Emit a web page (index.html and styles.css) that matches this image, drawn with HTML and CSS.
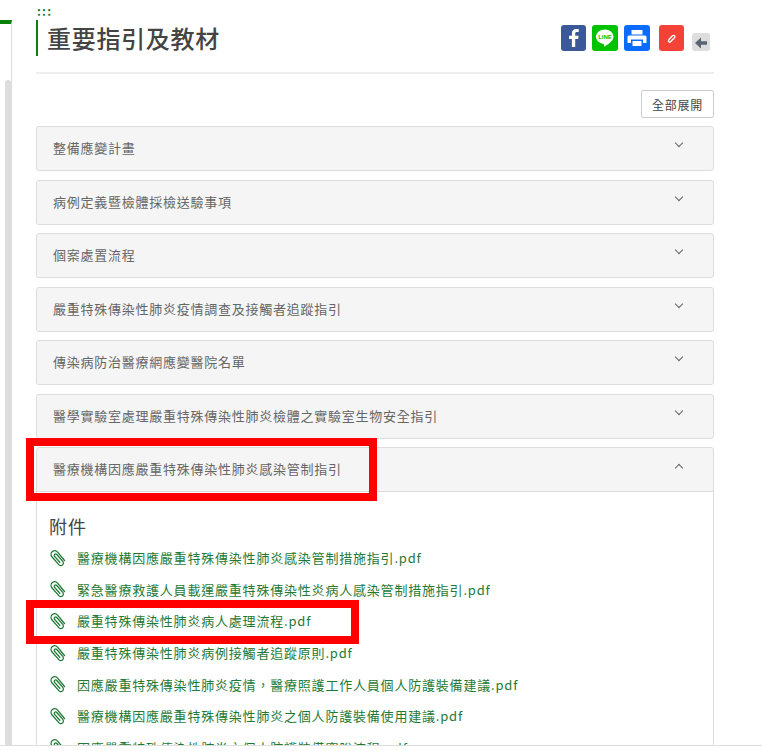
FILE: index.html
```html
<!DOCTYPE html>
<html lang="zh-Hant">
  <head>
    <meta charset="UTF-8" />
    <title>重要指引及教材</title>
    <link rel="stylesheet" href="styles.css">
  </head>
  <body>
    <svg class="icon-defs" width="0" height="0">
      <symbol id="clip" viewBox="0 0 18 18">
        <path d="M15.500 11.500 8.600 3.200C7.300 1.600 5 1.400 3.400 2.600 1.800 3.900 1.600 6.200 2.900 7.800L9.800 15.600C10.700 16.700 12.300 16.900 13.400 16 14.500 15.100 14.700 13.500 13.800 12.400L7.800 5.500C7.300 4.900 6.400 4.800 5.800 5.300 5.200 5.800 5.100 6.700 5.600 7.300L10.800 13.300" fill="none" stroke="#1f7a35" stroke-width="1.300" stroke-linecap="round"/>
      </symbol>
    </svg>

    <div class="page">
      <div class="sidebar">
        <div class="sidebar-scroll"></div>
      </div>

      <div class="main">
        <div class="dots">:::</div>
        <div class="title-row">
          <h2 class="page-title">重要指引及教材</h2>
          <div class="share-icons">
            <span class="share share-fb">
              <svg width="25" height="26" viewBox="0 0 25 26"><path d="M14.200 22V14h2.900l.5-3.300h-3.400V8.600c0-1 .4-1.600 1.700-1.600h1.800V4.100c-.6-.1-1.500-.2-2.500-.2-2.700 0-4.300 1.600-4.300 4.400v2.400H8v3.300h2.900v8z" fill="#fff"/></svg>
            </span>
            <span class="share share-line">
              <svg width="26" height="26" viewBox="0 0 26 26"><path d="M13 4.500c-5 0-9 3.200-9 7.300 0 3.600 3.200 6.600 7.500 7.200.8.200.5 1.200.4 2 0 .5.400.6 1 .3 2.500-1.400 8.600-5.100 8.600-9.500 0-4.100-3.900-7.300-8.500-7.300z" fill="#fff"/><text x="13" y="14.200" class="line-text">LINE</text></svg>
            </span>
            <span class="share share-print">
              <svg width="26" height="26" viewBox="0 0 26 26"><path d="M7.500 5h11v4.500h-11zM5 10.500h16a1.500 1.500 0 0 1 1.500 1.500v6h-3.500v-3.500H7V18H3.500v-6A1.500 1.500 0 0 1 5 10.500zM8.500 16h9v5h-9z" fill="#fff"/></svg>
            </span>
            <span class="share share-pin">
              <svg width="25" height="26" viewBox="0 0 25 26"><path d="M9.800 14.800 13.500 10.800c.7-.7 1.700-.6 2.200 0 .5.600.4 1.400-.2 2l-3.900 4c-.5.500-1.300.5-1.700.1-.5-.5-.5-1.400-.1-2.100z" fill="none" stroke="#fff" stroke-width="1.300"/></svg>
            </span>
            <span class="share-back">
              <svg width="18" height="18" viewBox="0 0 18 18"><path d="M9 3.500 3 9l6 5.500v-3.700h6V7.200H9z" fill="#5a6472"/></svg>
            </span>
          </div>
        </div>

        <div class="toolbar">
          <button class="expand-button">全部展開</button>
        </div>

        <div class="panel"><div class="panel-heading"><span>整備應變計畫</span><i class="arrow"></i></div></div>
        <div class="panel"><div class="panel-heading"><span>病例定義暨檢體採檢送驗事項</span><i class="arrow"></i></div></div>
        <div class="panel"><div class="panel-heading"><span>個案處置流程</span><i class="arrow"></i></div></div>
        <div class="panel"><div class="panel-heading"><span>嚴重特殊傳染性肺炎疫情調查及接觸者追蹤指引</span><i class="arrow"></i></div></div>
        <div class="panel"><div class="panel-heading"><span>傳染病防治醫療網應變醫院名單</span><i class="arrow"></i></div></div>
        <div class="panel"><div class="panel-heading"><span>醫學實驗室處理嚴重特殊傳染性肺炎檢體之實驗室生物安全指引</span><i class="arrow"></i></div></div>
        <div class="panel panel-open">
          <div class="panel-heading"><span>醫療機構因應嚴重特殊傳染性肺炎感染管制指引</span><i class="arrow arrow-up"></i></div>
          <div class="panel-body">
            <h4 class="attach-title">附件</h4>
            <a class="attach-link"><svg class="clip-icon"><use href="#clip"/></svg>醫療機構因應嚴重特殊傳染性肺炎感染管制措施指引.pdf</a>
            <a class="attach-link"><svg class="clip-icon"><use href="#clip"/></svg>緊急醫療救護人員載運嚴重特殊傳染性炎病人感染管制措施指引.pdf</a>
            <a class="attach-link"><svg class="clip-icon"><use href="#clip"/></svg>嚴重特殊傳染性肺炎病人處理流程.pdf</a>
            <a class="attach-link"><svg class="clip-icon"><use href="#clip"/></svg>嚴重特殊傳染性肺炎病例接觸者追蹤原則.pdf</a>
            <a class="attach-link"><svg class="clip-icon"><use href="#clip"/></svg>因應嚴重特殊傳染性肺炎疫情，醫療照護工作人員個人防護裝備建議.pdf</a>
            <a class="attach-link"><svg class="clip-icon"><use href="#clip"/></svg>醫療機構因應嚴重特殊傳染性肺炎之個人防護裝備使用建議.pdf</a>
            <a class="attach-link"><svg class="clip-icon"><use href="#clip"/></svg>因應嚴重特殊傳染性肺炎之個人防護裝備穿脫流程.pdf</a>
          </div>
        </div>
      </div>

      <!-- red marks drawn over the screenshot -->
      <div class="mark mark-heading"></div>
      <div class="mark mark-link"></div>
      <div class="bottom-edge"></div>
    </div>
  </body>
</html>
```

FILE: styles.css
```css
html,
body {
  margin: 0;
  height: 100%;
  overflow: hidden;
  background-color: #fff;
}

body {
  font-family: "Noto Sans CJK TC", "Noto Sans", sans-serif;
  color: #555;
}

.icon-defs {
  display: none;
}

.page {
  display: flex;
  position: relative;
  height: 751px;
  overflow: hidden;
}

.sidebar {
  flex: none;
  width: 11px;
  margin-top: 20px;
  border-top: 4px solid #0a820a;
  border-right: 1px solid #ddd;
}

.sidebar-scroll {
  width: 6px;
  height: 700px;
  margin: 56px 0 0 5px;
  background-color: #ddd;
  border-radius: 3px 3px 0 0;
}

.main {
  flex: none;
  width: 678px;
  margin-left: 24px;
}

.dots {
  height: 20px;
  padding-left: 1px;
  font-size: 12px;
  font-weight: bold;
  line-height: 22px;
  letter-spacing: 1.2px;
  color: #1f7a35;
}

.title-row {
  display: flex;
  justify-content: space-between;
  height: 52px;
  border-bottom: 2px solid #eee;
}

.page-title {
  height: 36px;
  margin: 0;
  padding-left: 9px;
  border-left: 2px solid #0a820a;
  font-size: 24px;
  font-weight: 500;
  line-height: 36px;
  letter-spacing: 0.7px;
  color: #444;
}

.share-icons {
  display: flex;
  align-items: flex-start;
  padding: 5px 4px 0 0;
}

.share {
  display: block;
  width: 26px;
  height: 26px;
  margin-right: 6px;
  border-radius: 3px;
}

.share svg {
  display: block;
}

.share-fb {
  width: 25px;
  background-color: #3b5998;
}

.share-line {
  background-color: #00c300;
}

.share-print {
  background-color: #0a6cff;
  margin-right: 9px;
}

.share-pin {
  width: 25px;
  margin-right: 8px;
  background-color: #f44336;
}

.share-back {
  display: block;
  width: 18px;
  height: 18px;
  margin-top: 8px;
  background-color: #ddd;
  border-radius: 3px;
}

.line-text {
  font-family: "Liberation Sans", sans-serif;
  font-size: 6px;
  font-weight: bold;
  text-anchor: middle;
  fill: #00c300;
}

.toolbar {
  display: flex;
  justify-content: flex-end;
  padding: 16px 0 8px;
}

.expand-button {
  width: 73px;
  height: 28px;
  padding: 0;
  background-color: #fff;
  border: 1px solid #ccc;
  border-radius: 2px;
  font-family: inherit;
  font-size: 12px;
  letter-spacing: 0.8px;
  color: #444;
}

.panel {
  margin-bottom: 8.5px;
  background-color: #f5f5f5;
  border: 1px solid #ddd;
  border-radius: 3px;
}

.panel-heading {
  display: flex;
  justify-content: space-between;
  height: 43px;
  padding-left: 16px;
  font-size: 13px;
  line-height: 42px;
  letter-spacing: 0.75px;
  color: #666;
}

.arrow {
  flex: none;
  width: 5px;
  height: 5px;
  margin: 13px 31px 0 0;
  border-right: 1px solid #666;
  border-bottom: 1px solid #666;
  transform: rotate(45deg);
}

.arrow-up {
  margin-top: 17px;
  transform: rotate(225deg);
}

.panel-open {
  margin-bottom: 0;
}

.panel-body {
  height: 400px;
  padding: 21px 12px 0;
  background-color: #fff;
  border-top: 1px solid #ddd;
}

.attach-title {
  margin: 0 0 3px;
  font-size: 18px;
  font-weight: 400;
  line-height: 26px;
  letter-spacing: 1px;
  color: #444;
}

.attach-link {
  display: flex;
  align-items: center;
  height: 31.6px;
  font-size: 13px;
  letter-spacing: 0.8px;
  color: #1f7a35;
}

.clip-icon {
  flex: none;
  width: 18px;
  height: 18px;
  margin: 0 10px 0 0;
}

.mark {
  position: absolute;
  border: 8px solid #f00;
}

.mark-heading {
  left: 26px;
  top: 438px;
  width: 335px;
  height: 47px;
}

.mark-link {
  left: 26px;
  top: 600px;
  width: 317px;
  height: 28px;
}

.bottom-edge {
  position: absolute;
  left: 0;
  right: 0;
  top: 745px;
  height: 6px;
  background-color: #fff;
  border-top: 1px solid #ddd;
}
```
